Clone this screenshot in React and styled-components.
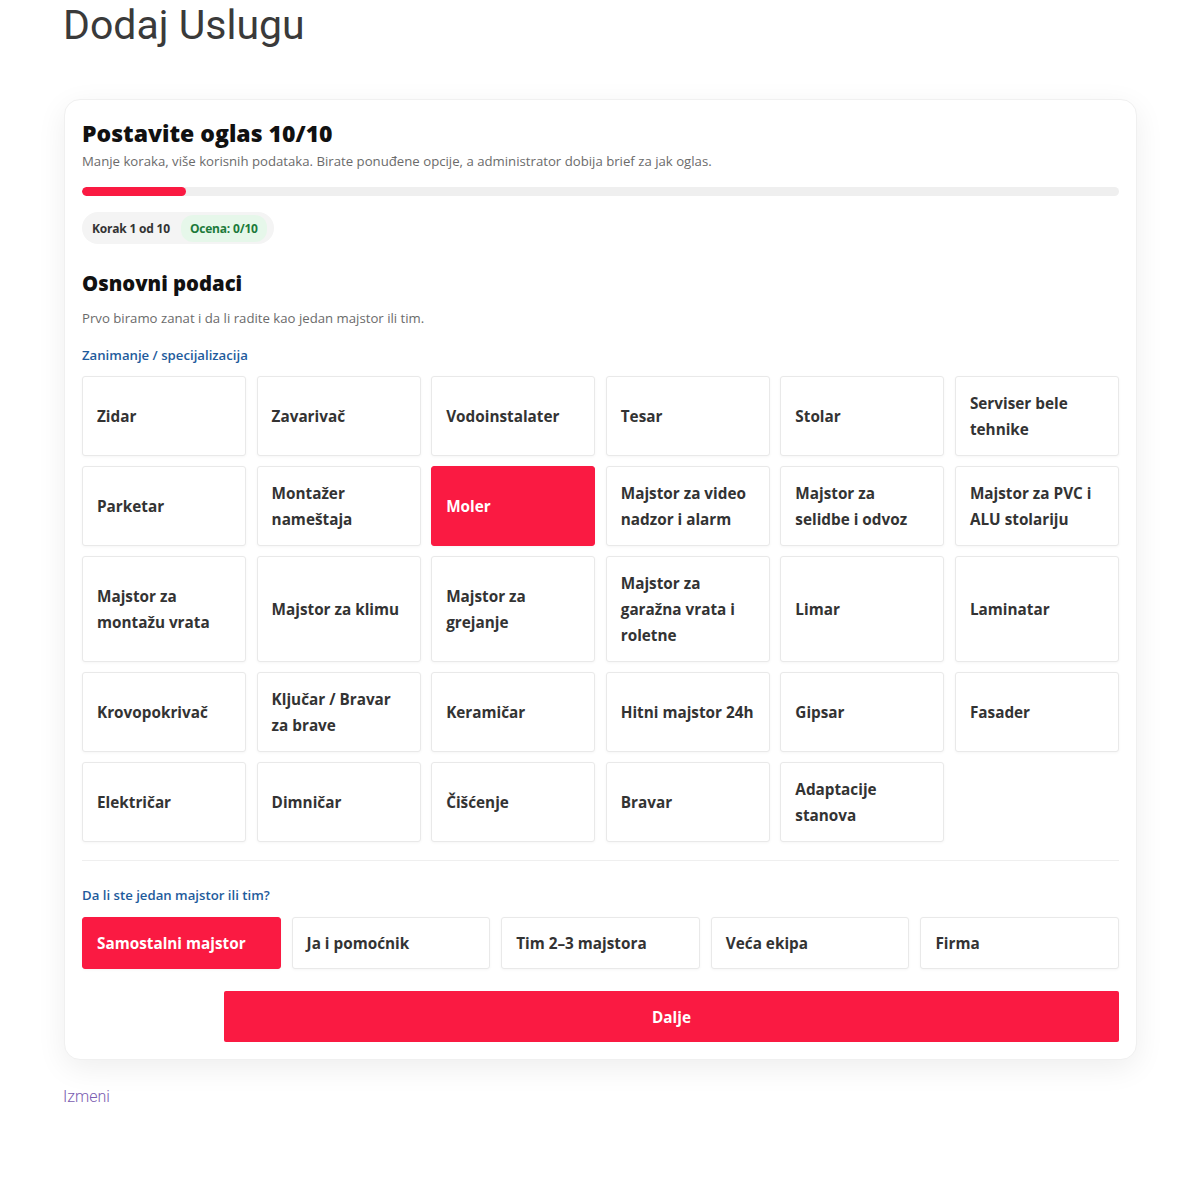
import React, { useState } from 'react';
import styled, { createGlobalStyle } from 'styled-components';

const GlobalStyle = createGlobalStyle`
  body {
    margin: 0;
    background: #ffffff;
    font-family: 'Open Sans', 'Lato', sans-serif;
  }
`;

const Page = styled.div`
  padding: 0 63px 60px 63px;
`;

const PageTitle = styled.h1`
  margin: 0 0 49px 0;
  font-family: 'Roboto', 'Liberation Sans', sans-serif;
  font-weight: 400;
  font-size: 41px;
  line-height: 50px;
  color: #3a3a3a;
`;

const Card = styled.div`
  margin-left: 1px;
  background: #ffffff;
  border-radius: 16px;
  border: 1px solid #f0f0f0;
  box-shadow: 0 8px 30px rgba(0, 0, 0, 0.07);
  padding: 17px 17px 17px 17px;
`;

const Title = styled.h2`
  margin: 0;
  font-family: 'Open Sans', sans-serif;
  font-weight: 800;
  font-size: 23px;
  line-height: 32px;
  color: #111;
`;

const Lead = styled.p`
  margin: ${(p) => p.$mt || 3}px 0 0 0;
  font-size: 13.2px;
  line-height: 18px;
  color: #6b6b6b;
`;

const Track = styled.div`
  margin-top: 17px;
  height: 9px;
  background: #efefef;
  border-radius: 6px;
  overflow: hidden;
`;

const Fill = styled.div`
  height: 100%;
  background: #fa1a42;
  border-radius: 6px;
`;

const StepPill = styled.div`
  margin-top: 16px;
  display: inline-flex;
  align-items: center;
  gap: 11px;
  padding: 4px 7px 4px 10px;
  height: 32px;
  box-sizing: border-box;
  background: #f4f4f4;
  border-radius: 16px;
  font-size: 12px;
  font-weight: 700;
  letter-spacing: -0.2px;
  color: #333;
`;

const ScorePill = styled.span`
  background: #e6f7ea;
  color: #1c7a3a;
  padding: 5px 9px;
  border-radius: 12px;
`;

const SectionTitle = styled.h3`
  margin: 25px 0 0 0;
  font-weight: 800;
  font-size: 20.3px;
  line-height: 28px;
  color: #111;
`;

const FieldLabel = styled.div`
  margin-top: ${(p) => p.$mt || 0}px;
  font-size: 13.2px;
  font-weight: 600;
  line-height: 18px;
  color: #1e5b9c;
`;

const OptionGrid = styled.div`
  margin-top: 12px;
  display: grid;
  grid-template-columns: repeat(6, 1fr);
  gap: 10px 10.5px;
`;

const Option = styled.button`
  display: flex;
  align-items: center;
  text-align: left;
  min-height: ${(p) => p.$h || 52}px;
  padding: ${(p) => (p.$compact ? 12 : 13)}px 14px;
  box-sizing: border-box;
  font-family: 'Open Sans', sans-serif;
  font-size: 15.3px;
  font-weight: 700;
  line-height: 26px;
  color: ${(p) => (p.$active ? '#ffffff' : '#333')};
  background: ${(p) => (p.$active ? '#fa1a42' : '#ffffff')};
  border: 1px solid ${(p) => (p.$active ? '#fa1a42' : '#e9e9e9')};
  border-radius: 3px;
  box-shadow: 0 1px 3px rgba(0, 0, 0, 0.04);
  cursor: pointer;
`;

const Divider = styled.hr`
  margin: 18px 0 0 0;
  border: none;
  border-top: 1px solid #efefef;
`;

const TeamRow = styled.div`
  margin-top: 13px;
  display: grid;
  grid-template-columns: repeat(5, 1fr);
  gap: 11px;
`;

const Actions = styled.div`
  margin-top: 22px;
  display: flex;
  gap: 10px;
`;

const BackSlot = styled.div`
  width: 132px;
`;

const NextButton = styled.button`
  flex: 1;
  height: 51px;
  border: none;
  border-radius: 2px;
  background: #fa1a42;
  color: #ffffff;
  font-family: 'Open Sans', sans-serif;
  font-size: 15.3px;
  font-weight: 700;
  cursor: pointer;
`;

const EditLink = styled.a`
  display: inline-block;
  margin-top: 27px;
  font-family: 'Roboto', sans-serif;
  font-weight: 300;
  font-size: 16px;
  color: #7a5cb0;
  text-decoration: none;
`;

const trades = [
  ['Zidar', 'Zavarivač', 'Vodoinstalater', 'Tesar', 'Stolar', 'Serviser bele tehnike'],
  ['Parketar', 'Montažer nameštaja', 'Moler', 'Majstor za video nadzor i alarm', 'Majstor za selidbe i odvoz', 'Majstor za PVC i ALU stolariju'],
  ['Majstor za montažu vrata', 'Majstor za klimu', 'Majstor za grejanje', 'Majstor za garažna vrata i roletne', 'Limar', 'Laminatar'],
  ['Krovopokrivač', 'Ključar / Bravar za brave', 'Keramičar', 'Hitni majstor 24h', 'Gipsar', 'Fasader'],
  ['Električar', 'Dimničar', 'Čišćenje', 'Bravar', 'Adaptacije stanova'],
];

const rowHeights = [77, 80, 105, 79, 79];

const teams = ['Samostalni majstor', 'Ja i pomoćnik', 'Tim 2–3 majstora', 'Veća ekipa', 'Firma'];

export default function App() {
  const [trade, setTrade] = useState('Moler');
  const [team, setTeam] = useState('Samostalni majstor');

  return (
    <Page>
      <GlobalStyle />
      <PageTitle>Dodaj Uslugu</PageTitle>
      <Card>
        <Title>Postavite oglas 10/10</Title>
        <Lead>Manje koraka, više korisnih podataka. Birate ponuđene opcije, a administrator dobija brief za jak oglas.</Lead>
        <Track>
          <Fill style={{ width: '10%' }} />
        </Track>
        <StepPill>
          <span>Korak 1 od 10</span>
          <ScorePill>Ocena: 0/10</ScorePill>
        </StepPill>

        <SectionTitle>Osnovni podaci</SectionTitle>
        <Lead $mt={12}>Prvo biramo zanat i da li radite kao jedan majstor ili tim.</Lead>
        <FieldLabel $mt={19}>Zanimanje / specijalizacija</FieldLabel>
        <OptionGrid>
          {trades.map((row, i) =>
            row.map((t) => (
              <Option key={t} $h={rowHeights[i]} $active={trade === t} onClick={() => setTrade(t)}>
                {t}
              </Option>
            ))
          )}
        </OptionGrid>

        <Divider />
        <FieldLabel $mt={25}>Da li ste jedan majstor ili tim?</FieldLabel>
        <TeamRow>
          {teams.map((t) => (
            <Option key={t} $compact $active={team === t} onClick={() => setTeam(t)}>
              {t}
            </Option>
          ))}
        </TeamRow>

        <Actions>
          <BackSlot />
          <NextButton>Dalje</NextButton>
        </Actions>
      </Card>
      <EditLink href="#">Izmeni</EditLink>
    </Page>
  );
}
